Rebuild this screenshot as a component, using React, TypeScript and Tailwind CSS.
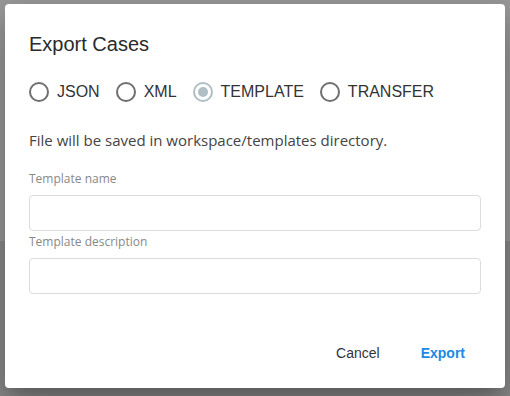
import { useState } from 'react';

const formats = ['JSON', 'XML', 'TEMPLATE', 'TRANSFER'];

function Radio({ label, checked, onSelect }: { label: string; checked: boolean; onSelect: () => void }) {
  return (
    <button type="button" onClick={onSelect} className="flex items-center gap-2 h-[42px]">
      <span
        className={`flex h-5 w-5 items-center justify-center rounded-full border-2 ${
          checked ? 'border-[#b0bec5]' : 'border-[#6f6f6f]'
        }`}
      >
        {checked && <span className="h-2.5 w-2.5 rounded-full bg-[#b0bec5]" />}
      </span>
      <span className="text-base text-[#333] font-['Liberation_Sans',Arial,sans-serif]">{label}</span>
    </button>
  );
}

export default function App() {
  const [format, setFormat] = useState('TEMPLATE');

  return (
    <div className="relative h-[396px] w-[510px] overflow-hidden">
      <div className="flex h-full flex-col">
        <div className="h-[241px] bg-[#9a9a9a]" />
        <div className="flex-1 bg-[#8b8b8b]" />
      </div>

      <div className="absolute left-[5px] top-[4px] flex h-[384px] w-[500px] flex-col rounded bg-white px-6 pt-6 shadow-[0_11px_15px_-7px_rgba(0,0,0,0.2),0_24px_38px_3px_rgba(0,0,0,0.14),0_9px_46px_8px_rgba(0,0,0,0.12)]">
        <h2 className="h-8 text-[20px] leading-8 text-[#2a2a2a] font-['Liberation_Sans',Arial,sans-serif]">
          Export Cases
        </h2>

        <div className="mt-[11px] flex items-center gap-4">
          {formats.map((f) => (
            <Radio key={f} label={f} checked={format === f} onSelect={() => setFormat(f)} />
          ))}
        </div>

        <p className="mt-[17px] text-[15px] leading-5 text-[#444] font-['Open_Sans',sans-serif]">
          File will be saved in workspace/templates directory.
        </p>

        <label className="mt-[21px] text-xs leading-4 text-[#888] font-['Open_Sans',sans-serif]">
          Template name
        </label>
        <input className="mt-2 h-9 w-full rounded border border-[#dcdcdc] px-3 text-sm outline-none" />

        <label className="mt-[3px] text-xs leading-4 text-[#888] font-['Open_Sans',sans-serif]">
          Template description
        </label>
        <input className="mt-2 h-9 w-full rounded border border-[#dcdcdc] px-3 text-sm outline-none" />

        <div className="mt-auto mb-[17px] flex items-center justify-end gap-[25px] pr-2 font-['Liberation_Sans',Arial,sans-serif]">
          <button type="button" className="h-9 px-2 text-sm text-[#333]">
            Cancel
          </button>
          <button type="button" className="h-9 px-2 text-sm font-bold text-[#1e88e5]">
            Export
          </button>
        </div>
      </div>
    </div>
  );
}
